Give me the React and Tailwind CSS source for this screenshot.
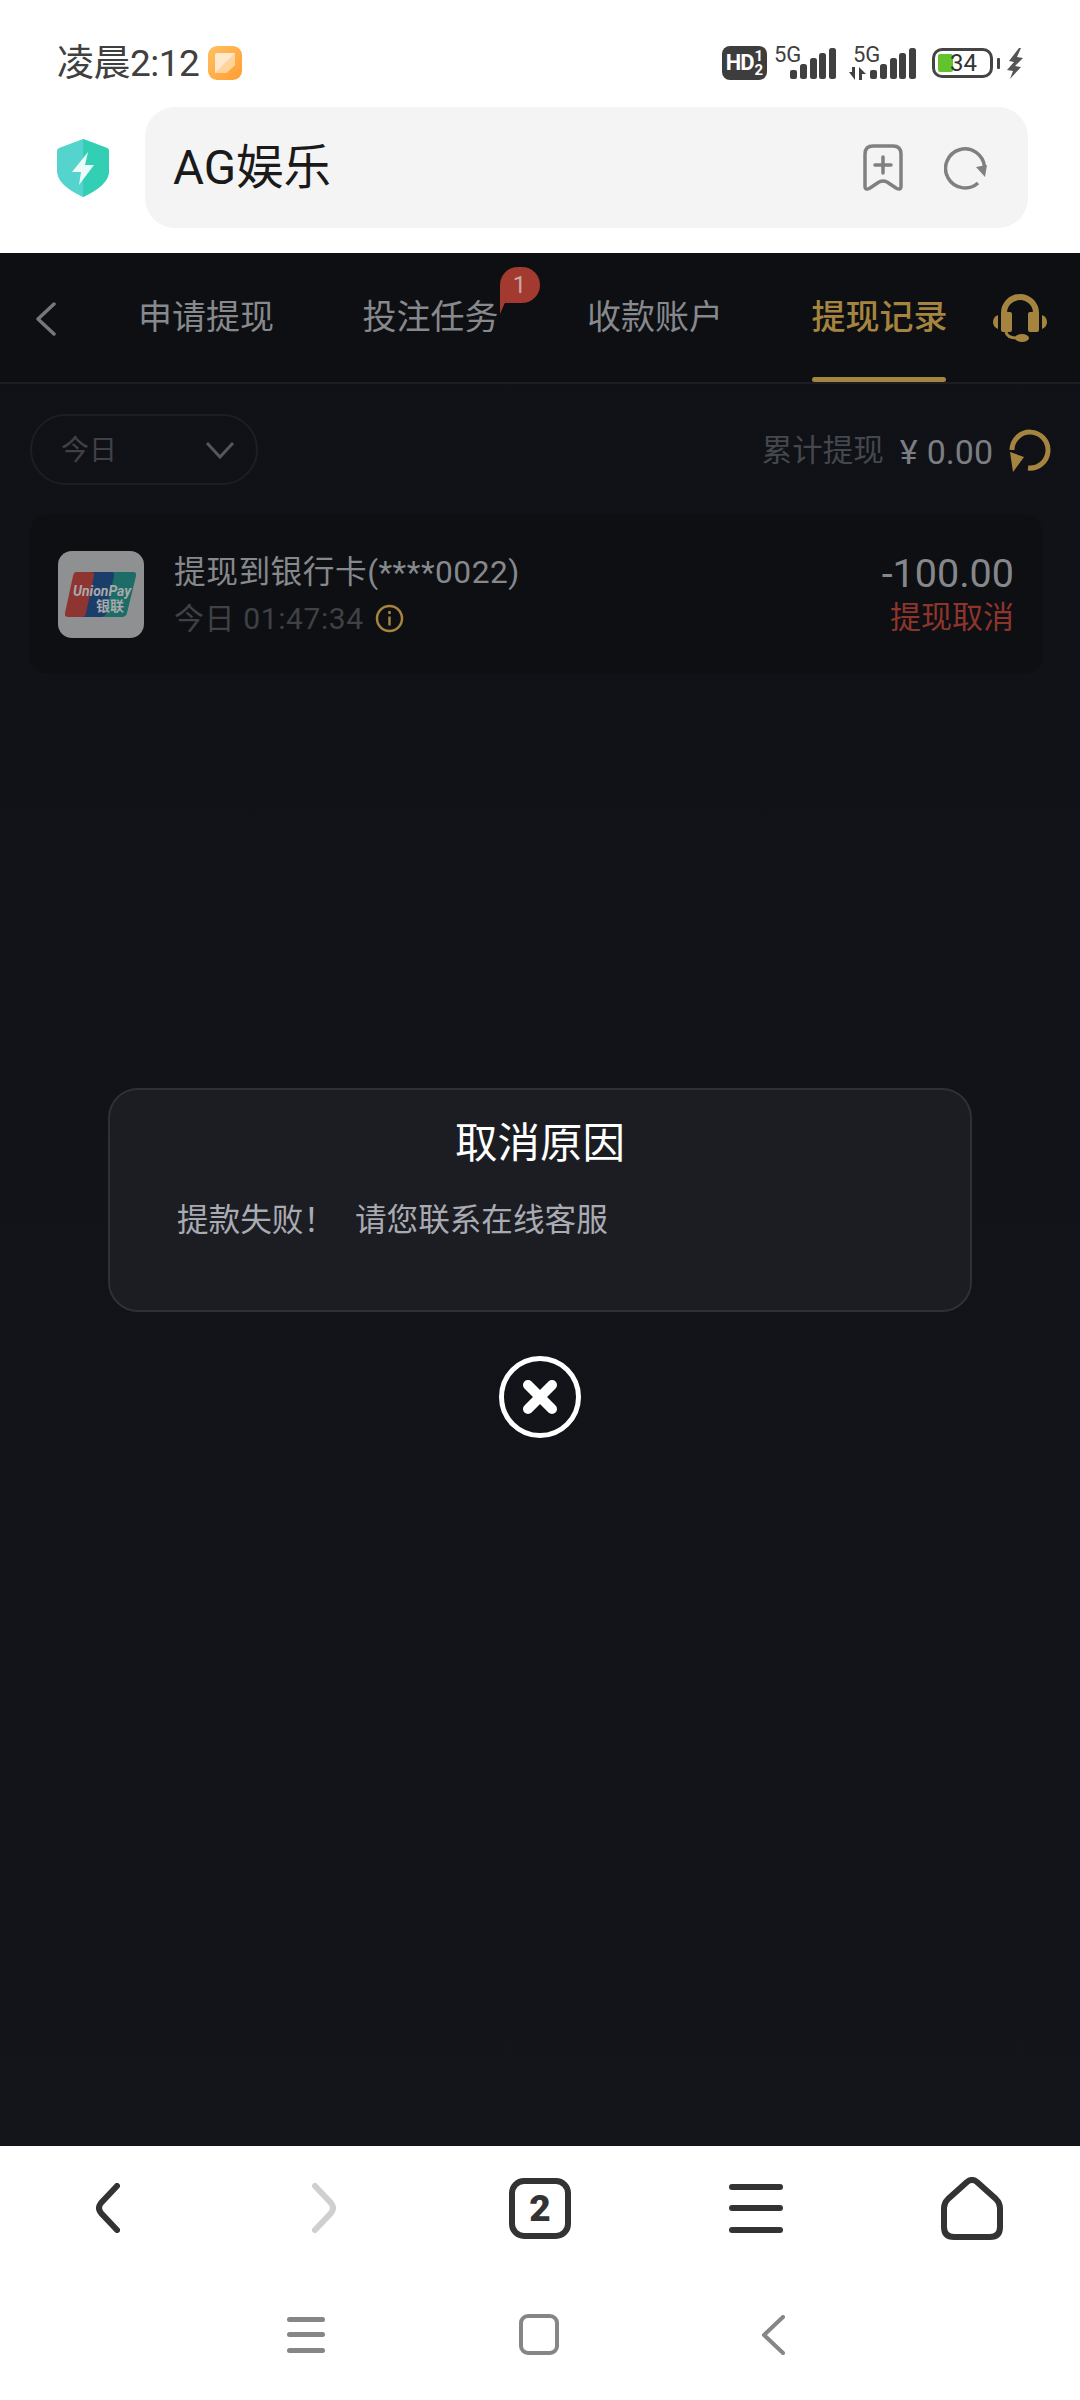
import { X } from "lucide-react";

const FONT = "font-['Roboto','Noto_Sans_CJK_SC',sans-serif]";

function SignalBars() {
  return (
    <svg width="46" height="31" viewBox="0 0 46 31" fill="#404040">
      <rect x="0" y="22" width="7" height="9" rx="2" />
      <rect x="10" y="16" width="7" height="15" rx="2.5" />
      <rect x="20" y="10" width="7" height="21" rx="2.5" />
      <rect x="29" y="5" width="7" height="26" rx="2.5" />
      <rect x="39" y="0" width="7" height="31" rx="2.5" />
    </svg>
  );
}

function StatusIcons() {
  return (
    <div className="flex items-start text-[#404040]">
      <div className="w-[45px] h-[34px] bg-[#3d3d3d] rounded-[8px] flex items-center justify-center text-white font-bold gap-[1px]">
        <span className="text-[22px] leading-none tracking-[-1px]">HD</span>
        <div className="flex flex-col items-center text-[15px] leading-[14px]">
          <span>1</span>
          <span>2</span>
        </div>
      </div>
      <div className="relative w-[62px] ml-[7px] h-[34px]">
        <span className="block text-[22px] leading-[18px]">5G</span>
        <div className="absolute left-[16px] top-[2px]">
          <SignalBars />
        </div>
      </div>
      <div className="relative w-[68px] ml-[13px] h-[34px]">
        <span className="block text-[22px] leading-[18px] ml-[4px]">5G</span>
        <svg className="absolute left-0 bottom-0" width="20" height="13" viewBox="0 0 20 13" fill="#404040">
          <path d="M0 5h3V0h3v13z" />
          <path d="M10 13V0l7 7h-4v6z" />
        </svg>
        <div className="absolute left-[21px] top-[2px]">
          <SignalBars />
        </div>
      </div>
      <div className="flex items-center ml-[15px] mt-[2px]">
        <div className="w-[61px] h-[30px] border-[3px] border-[#444] rounded-[10px] flex items-center pl-[3px]">
          <div className="w-[15px] h-[18px] bg-[#63c32d] rounded-[2px]" />
          <span className="-ml-[3px] text-[24px] leading-none text-[#333]">34</span>
        </div>
        <div className="w-[3px] h-[11px] bg-[#444] ml-[4px] rounded-[1px]" />
      </div>
      <svg className="ml-[7px] mt-[2px]" width="18" height="31" viewBox="0 0 18 31" fill="#555">
        <path d="M12 0 2 13l5 1-7 8 6 1-3 8 11-12-6-1 8-8-6-1 4-9z" />
      </svg>
    </div>
  );
}

function Shield() {
  return (
    <svg width="52" height="58" viewBox="0 0 52 58">
      <path d="M26 0 L50 9 Q52 10 52 12 V32 Q52 46 26 58 Q0 46 0 32 V12 Q0 10 2 9Z" fill="#55d3cd" />
      <path d="M26 0 L50 9 Q52 10 52 12 V32 Q52 46 26 58Z" fill="#33cfb4" />
      <path d="M31 13 L15 33 H24 L22 46 L37 26 H28Z" fill="#eafbf8" />
    </svg>
  );
}

function UnionPay() {
  return (
    <svg width="72" height="45" viewBox="0 0 72 45">
      <path d="M11 0 H30 Q33 0 32 4 L22 41 Q21 45 17 45 H3 Q-1 45 0 41 L8 4 Q9 0 11 0Z" fill="#8e3431" />
      <path d="M26 0 H50 Q53 0 52 4 L42 41 Q41 45 37 45 H17 Q20 45 21 41 L29 4 Q30 0 26 0Z" fill="#1a3d69" />
      <path d="M46 0 H68 Q72 0 71 4 L62 41 Q61 45 57 45 H37 Q40 45 41 41 L49 4 Q50 0 46 0Z" fill="#1e6c67" />
      <text x="8" y="24" fontSize="14" fontWeight="700" fontStyle="italic" fill="#a8a9ab" fontFamily="Roboto, sans-serif">
        UnionPay
      </text>
      <text x="31" y="39" fontSize="14" fontWeight="700" fill="#a8a9ab" fontFamily="'Noto Sans CJK SC', sans-serif">
        银联
      </text>
    </svg>
  );
}

function Headset() {
  return (
    <svg width="54" height="49" viewBox="0 0 54 49" fill="#a5843f">
      <path d="M11 28 V19 A16 16 0 0 1 43 19 V28" fill="none" stroke="#a5843f" strokeWidth="6" />
      <rect x="8" y="18" width="11" height="20" rx="2" />
      <rect x="35" y="18" width="11" height="20" rx="2" />
      <path d="M5 21 Q0 23 0 28 Q0 33 5 35Z" />
      <path d="M49 21 Q54 23 54 28 Q54 33 49 35Z" />
      <path d="M13 38 Q14 44 24 44" fill="none" stroke="#a5843f" strokeWidth="3" />
      <ellipse cx="29" cy="44" rx="7" ry="4" />
    </svg>
  );
}

function TabNav() {
  const tabs = [
    { label: "申请提现" },
    { label: "投注任务", badge: "1" },
    { label: "收款账户" },
    { label: "提现记录", active: true },
  ];

  return (
    <div className="h-[131px] bg-[#0d0f13] border-b-[2px] border-[#1c1e23] flex">
      <svg className="ml-[36px] mt-[49px]" width="20" height="34" viewBox="0 0 20 34" fill="none" stroke="#75777c" strokeWidth="3.5" strokeLinecap="round" strokeLinejoin="round">
        <path d="M18 2 2 17l16 15" />
      </svg>
      <div className="flex gap-[90px] ml-[82px]">
        {tabs.map((tab) => (
          <div key={tab.label} className="relative w-[134.5px] flex flex-col justify-between">
            <span className={`mt-[43px] text-[34px] leading-[42px] whitespace-nowrap ${tab.active ? "text-[#a5843f] font-medium" : "text-[#87898c]"}`}>
              {tab.label}
            </span>
            {tab.active && <div className="h-[5px] bg-[#a5843f] rounded-full" />}
            {tab.badge && (
              <div className="absolute left-[137px] top-[14px] w-[40px] h-[36px] bg-[#a33a2f] rounded-[18px] rounded-bl-[4px] flex items-center justify-center text-[24px] leading-none text-[#c9a9a5]">
                {tab.badge}
                <svg className="absolute left-0 top-[24px]" width="10" height="23" viewBox="0 0 10 23" fill="#a33a2f">
                  <path d="M0 0h10L0 23z" />
                </svg>
              </div>
            )}
          </div>
        ))}
      </div>
      <div className="ml-[47px] mt-[41px]">
        <Headset />
      </div>
    </div>
  );
}

function FilterRow() {
  return (
    <div className="mt-[30px] pl-[30px] pr-[28px] flex items-center justify-between">
      <div className="w-[228px] h-[71px] rounded-full border-[2px] border-[#1c1e23] pl-[29px] pr-[21px] flex items-center justify-between">
        <span className="pt-[2px] text-[28px] leading-none text-[#3f4146]">今日</span>
        <svg width="30" height="18" viewBox="0 0 30 18" fill="none" stroke="#54565b" strokeWidth="3">
          <path d="M2 2l13 14L28 2" />
        </svg>
      </div>
      <div className="flex items-center">
        <span className="pt-[4px] text-[30.5px] leading-none text-[#44474d]">累计提现</span>
        <span className="pt-[4px] ml-[16px] text-[34px] leading-none text-[#7b7d82]">¥</span>
        <span className="pt-[4px] ml-[9px] text-[34px] leading-none text-[#7b7d82]">0.00</span>
        <svg className="ml-[15px]" width="44" height="44" viewBox="0 0 44 44" fill="none">
          <path d="M4 22 A18 18 0 1 1 20 40" stroke="#a5843f" strokeWidth="5" />
          <path d="M2 24 16 29 5 44z" fill="#a5843f" />
        </svg>
      </div>
    </div>
  );
}

function RecordCard() {
  return (
    <div className="mt-[30px] ml-[29px] w-[1014px] h-[159px] rounded-[20px] bg-[#0d0f13] pl-[29px] pr-[29px] flex items-center">
      <div className="w-[86px] h-[87px] rounded-[14px] bg-[#8f9092] flex items-center justify-center shrink-0">
        <UnionPay />
      </div>
      <div className="ml-[30px] flex flex-col gap-[8px]">
        <span className="text-[31.7px] leading-[40px] text-[#86888c] whitespace-nowrap tracking-[0.5px]">提现到银行卡(****0022)</span>
        <div className="flex items-center">
          <span className="text-[30px] leading-[36px] text-[#3f4146] tracking-[0.6px]">今日 01:47:34</span>
          <svg className="ml-[11px]" width="29" height="29" viewBox="0 0 29 29" fill="none" stroke="#a5843f" strokeWidth="2.5">
            <circle cx="14.5" cy="14.5" r="12.5" />
            <path d="M14.5 12.5v9" />
            <path d="M14.5 7v3" />
          </svg>
        </div>
      </div>
      <div className="ml-auto flex flex-col items-end gap-[2px]">
        <span className="text-[39.5px] leading-[44px] text-[#85878b]">-100.00</span>
        <span className="text-[31px] leading-[40px] text-[#8e352b]">提现取消</span>
      </div>
    </div>
  );
}

function CancelDialog() {
  return (
    <div className="absolute inset-0 flex flex-col items-center pt-[835px]">
      <div className="w-[864px] h-[224px] bg-[#1c1d23] border-[2px] border-[#2e3039] rounded-[30px] pt-[30px]">
        <h2 className="text-center text-[42.5px] leading-[48px] text-white">取消原因</h2>
        <p className="mt-[32px] ml-[67px] flex gap-[20px] text-[31.6px] leading-[42px] text-[#a9abb2]">
          <span>提款失败！</span>
          <span>请您联系在线客服</span>
        </p>
      </div>
      <button className="mt-[44px] w-[82px] h-[82px] rounded-full border-[5px] border-white flex items-center justify-center">
        <X size={48} color="white" strokeWidth={5} />
      </button>
    </div>
  );
}

function BrowserToolbar() {
  return (
    <div className="grid grid-cols-5 h-[124px] items-center justify-items-center text-[#333]">
      <svg width="24" height="50" viewBox="0 0 24 50" fill="none" stroke="#333" strokeWidth="6" strokeLinecap="round">
        <path d="M21 3 5 20Q1 25 5 30L21 47" />
      </svg>
      <svg width="24" height="50" viewBox="0 0 24 50" fill="none" stroke="#cfcfcf" strokeWidth="6" strokeLinecap="round">
        <path d="M3 3 19 20Q23 25 19 30L3 47" />
      </svg>
      <div className="w-[62px] h-[61px] border-[6px] border-[#333] rounded-[15px] flex items-center justify-center text-[37px] leading-none font-black font-['Roboto']">
        2
      </div>
      <div className="flex flex-col gap-[15.5px] -ml-[1px]">
        <div className="w-[54px] h-[6px] rounded-full bg-[#333]" />
        <div className="w-[54px] h-[6px] rounded-full bg-[#333]" />
        <div className="w-[54px] h-[6px] rounded-full bg-[#333]" />
      </div>
      <svg width="62" height="63" viewBox="0 0 62 63" fill="none" stroke="#333" strokeWidth="6" strokeLinejoin="round">
        <path d="M26 5 7 22Q3 26 3 31V50Q3 60 13 60H49Q59 60 59 50V31Q59 26 55 22L36 5Q31 1 26 5Z" />
      </svg>
    </div>
  );
}

function SystemNav() {
  return (
    <div className="flex items-center pt-[44px] pl-[287px]">
      <div className="flex flex-col gap-[10.5px]">
        <div className="w-[38px] h-[5px] rounded-full bg-[#868686]" />
        <div className="w-[38px] h-[5px] rounded-full bg-[#868686]" />
        <div className="w-[38px] h-[5px] rounded-full bg-[#868686]" />
      </div>
      <div className="ml-[194px] w-[40px] h-[41px] border-[4px] border-[#868686] rounded-[9px]" />
      <svg className="ml-[201px]" width="25" height="40" viewBox="0 0 25 40" fill="none" stroke="#868686" strokeWidth="4" strokeLinecap="round" strokeLinejoin="round">
        <path d="M23 2 4 20l19 18" />
      </svg>
    </div>
  );
}

export default function App() {
  return (
    <div className={`w-[1080px] h-[2400px] bg-white flex flex-col overflow-hidden ${FONT}`}>
      {/* phone status bar */}
      <div className="h-[107px] pt-[46px] pl-[57px] pr-[55px] flex justify-between items-start">
        <div className="flex items-center h-[34px]">
          <span className="text-[37px] leading-none text-[#404040] tracking-[-0.5px]">凌晨2:12</span>
          <div className="ml-[9px] w-[34px] h-[34px] rounded-[9px] bg-gradient-to-br from-[#ffc060] to-[#ff9e30] flex items-center justify-center">
            <svg width="20" height="20" viewBox="0 0 20 20">
              <path d="M0 2Q0 0 2 0H20V12L11 20H0Z" fill="#ffe9cc" />
              <path d="M20 0V12L11 20H0Z" fill="#ffd39a" />
            </svg>
          </div>
        </div>
        <StatusIcons />
      </div>

      {/* browser address bar */}
      <div className="h-[146px] pl-[57px] flex items-start">
        <div className="mt-[32px]">
          <Shield />
        </div>
        <div className="ml-[36px] w-[883px] h-[121px] rounded-[30px] bg-[#f4f4f4] pl-[28px] pr-[41px] flex items-center">
          <span className="pt-[3px] text-[47.5px] leading-none text-[#1a1a1a]">AG娱乐</span>
          <svg className="ml-auto" width="40" height="47" viewBox="0 0 40 47" fill="none" stroke="#808080" strokeWidth="3.5" strokeLinecap="round" strokeLinejoin="round">
            <path d="M2 10Q2 2 10 2H30Q38 2 38 10V42Q38 47 33 44L24 38Q20 36 16 38L7 44Q2 47 2 42Z" />
            <path d="M20 13V29M12 21H28" />
          </svg>
          <svg className="ml-[41px]" width="43" height="44" viewBox="0 0 43 44" fill="none">
            <path d="M40.5 21A19.5 19.5 0 1 0 34 37" stroke="#808080" strokeWidth="3.5" />
            <path d="M32 21 L43 19 L41 31Z" fill="#808080" />
          </svg>
        </div>
      </div>

      {/* app page, dimmed behind the dialog */}
      <div className="relative flex-1 bg-gradient-to-b from-[#0f1116] via-[#111318] to-[#14151a]">
        <TabNav />
        <FilterRow />
        <RecordCard />
        <CancelDialog />
      </div>

      {/* browser toolbar and system navigation */}
      <div className="h-[254px] bg-white">
        <BrowserToolbar />
        <SystemNav />
      </div>
    </div>
  );
}
